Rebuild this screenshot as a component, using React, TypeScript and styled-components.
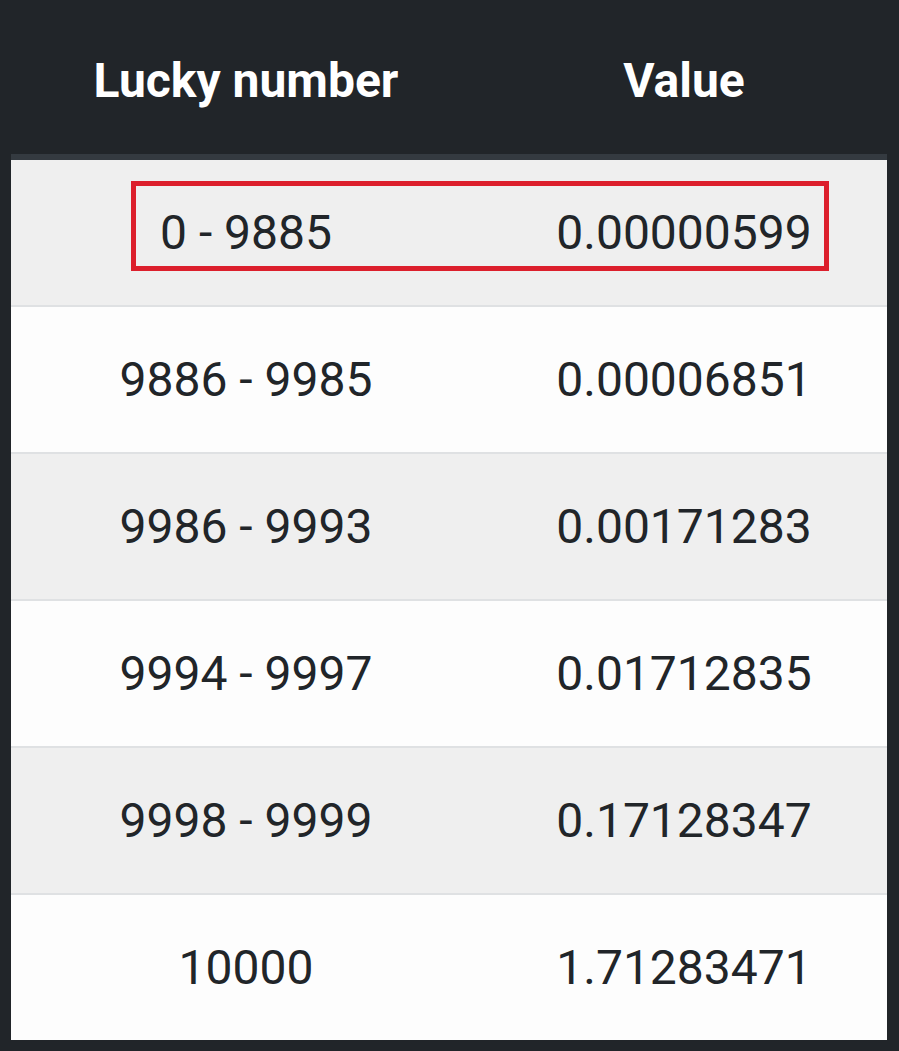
import React from "react";
import styled, { createGlobalStyle } from "styled-components";

const GlobalStyle = createGlobalStyle`
  html, body {
    margin: 0;
    padding: 0;
    background: #212529;
  }
  body {
    font-family: Roboto, "Liberation Sans", sans-serif;
  }
`;

const rows: [string, string][] = [
  ["0 - 9885", "0.00000599"],
  ["9886 - 9985", "0.00006851"],
  ["9986 - 9993", "0.00171283"],
  ["9994 - 9997", "0.01712835"],
  ["9998 - 9999", "0.17128347"],
  ["10000", "1.71283471"],
];

export default function App() {
  return (
    <Page>
      <GlobalStyle />
      <Table>
        <Head>
          <HeadCell>Lucky number</HeadCell>
          <HeadCell>Value</HeadCell>
        </Head>
        {rows.map(([range, value], i) => (
          <Row key={range} striped={i % 2 === 0} first={i === 0}>
            <Cell>{range}</Cell>
            <Cell>{value}</Cell>
            {i === 0 && <Highlight />}
          </Row>
        ))}
      </Table>
    </Page>
  );
}

const Page = styled.div`
  background: #212529;
  padding: 0 12px 12px 11px;
  min-height: 1051px;
  box-sizing: border-box;
`;

const Table = styled.div`
  width: 876px;
  display: flex;
  flex-direction: column;
`;

const Head = styled.div`
  display: grid;
  grid-template-columns: 470px 406px;
  height: 154px;
  border-bottom: 6px solid #343a40;
  background: #212529;
`;

const HeadCell = styled.div`
  display: flex;
  align-items: center;
  justify-content: center;
  color: #ffffff;
  font-weight: 700;
  font-size: 48px;
  padding-top: 6px;
`;

const Row = styled.div<{ striped: boolean; first: boolean }>`
  position: relative;
  display: grid;
  grid-template-columns: 470px 406px;
  height: 145px;
  background: ${(p) => (p.striped ? "#efefef" : "#fdfdfd")};
  border-top: ${(p) => (p.first ? "none" : "2px solid #dfe1e3")};
`;

const Cell = styled.div`
  display: flex;
  align-items: center;
  justify-content: center;
  color: #212529;
  font-size: 48px;
`;

const Highlight = styled.div`
  position: absolute;
  left: 120px;
  top: 21px;
  width: 698px;
  height: 90px;
  box-sizing: border-box;
  border: 5px solid #dc1f2c;
  pointer-events: none;
`;
